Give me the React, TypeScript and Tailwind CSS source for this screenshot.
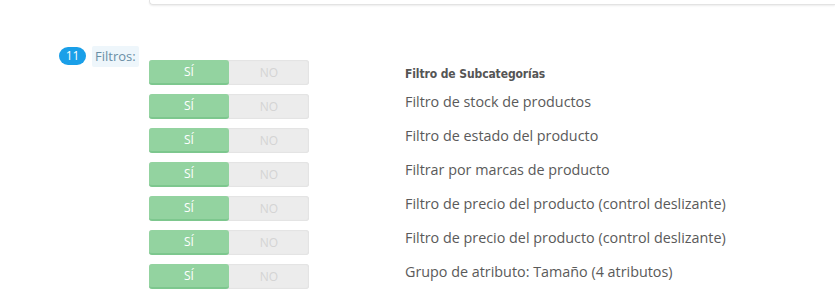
import React from "react";

const filters: string[] = [
    "Filtro de stock de productos",
    "Filtro de estado del producto",
    "Filtrar por marcas de producto",
    "Filtro de precio del producto (control deslizante)",
    "Filtro de precio del producto (control deslizante)",
    "Grupo de atributo: Tamaño (4 atributos)",
];

const Toggle: React.FC = () => (
    <div className="flex h-[25px] w-[160px] rounded-[3px] bg-[#ececec] shadow-[inset_0_0_2px_rgba(0,0,0,0.12)]">
        <span className="flex w-[80px] items-center justify-center rounded-[3px] border-b-2 border-[#7dc78e] bg-[#93d3a0] text-[12px] text-white">
            SÍ
        </span>
        <span className="flex w-[80px] items-center justify-center text-[12px] text-[#d4d4d4]">
            NO
        </span>
    </div>
);

const App: React.FC = () => {
    return (
        <div className="h-[296px] w-[835px] overflow-hidden bg-white font-['Open_Sans',sans-serif]">
            {/* panel above, only its bottom edge is visible */}
            <div className="ml-[149px] h-[5px] rounded-bl-[4px] border-b border-l border-[#e3e3e3] shadow-[0_1px_2px_rgba(0,0,0,0.08)]" />

            <div className="mt-[41px] flex">
                <div className="flex w-[149px] items-start pl-[59px]">
                    <span className="mt-[1px] flex h-[18px] w-[27px] items-center justify-center rounded-full bg-[#1a9fe8] text-[12px] leading-none text-white">
                        11
                    </span>
                    <span className="ml-[6px] rounded-[2px] bg-[#eef6fb] px-[3px] text-[13px] leading-[21px] text-[#6a8ea5]">
                        Filtros:
                    </span>
                </div>

                <div className="mt-[14px] flex flex-col gap-[9px]">
                    {Array.from({ length: 7 }).map((_, i) => (
                        <Toggle key={i} />
                    ))}
                </div>

                <div className="ml-[96px] flex flex-col text-[#5a5a5a]">
                    <div className="mt-[18px] h-[20px] font-['DejaVu_Sans_Condensed','DejaVu_Sans',sans-serif] text-[12px] leading-[20px] font-bold text-[#555] tracking-[-0.1px]">
                        Filtro de Subcategorías
                    </div>
                    {filters.map((label, i) => (
                        <div
                            key={i}
                            className={`${i === 0 ? "mt-[8px]" : "mt-[14px]"} h-[20px] text-[14.35px] leading-[20px]`}
                        >
                            {label}
                        </div>
                    ))}
                </div>
            </div>
        </div>
    );
};

export default App;
